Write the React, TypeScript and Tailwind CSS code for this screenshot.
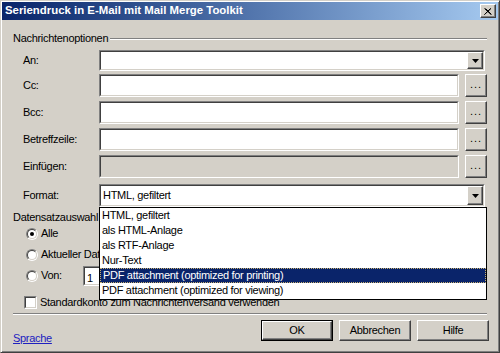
import React from 'react';

const items = [
  'HTML, gefiltert',
  'als HTML-Anlage',
  'als RTF-Anlage',
  'Nur-Text',
  'PDF attachment (optimized for printing)',
  'PDF attachment (optimized for viewing)',
];

// Win2000 style sunken edit frame
function Sunken({
  className = '',
  innerClass = 'bg-white',
  children,
}: {
  className?: string;
  innerClass?: string;
  children?: React.ReactNode;
}) {
  return (
    <div className={`border border-t-[#808080] border-l-[#808080] border-b-white border-r-white ${className}`}>
      <div className={`h-full border border-t-[#404040] border-l-[#404040] border-b-[#d4d0c8] border-r-[#d4d0c8] ${innerClass}`}>
        {children}
      </div>
    </div>
  );
}

function Raised({ className = '', children }: { className?: string; children?: React.ReactNode }) {
  return (
    <div
      className={`flex items-center justify-center bg-[#d4d0c8] border border-t-white border-l-white border-b-[#404040] border-r-[#404040] shadow-[inset_-1px_-1px_0_#808080] ${className}`}
    >
      {children}
    </div>
  );
}

function Arrow() {
  return (
    <svg width="7" height="4" viewBox="0 0 7 4">
      <polygon points="0,0 7,0 3.5,4" fill="#000" />
    </svg>
  );
}

function Combo({ value, className = '' }: { value?: string; className?: string }) {
  return (
    <Sunken className={className}>
      <div className="flex h-full items-center">
        <div className="flex-1 pl-[2px]">{value}</div>
        <Raised className="h-full w-[16px]">
          <Arrow />
        </Raised>
      </div>
    </Sunken>
  );
}

function Row({
  label,
  children,
  className = '',
}: {
  label: string;
  children: React.ReactNode;
  className?: string;
}) {
  return (
    <div className={`flex items-center pl-[10px] ${className}`}>
      <div className="w-[76px] shrink-0">{label}</div>
      {children}
    </div>
  );
}

function TextRow({ label, className = '', disabled = false }: { label: string; className?: string; disabled?: boolean }) {
  return (
    <Row label={label} className={className}>
      <Sunken className="h-full w-[360px]" innerClass={disabled ? 'bg-[#d4d0c8]' : 'bg-white'} />
      <Raised className="ml-[6px] h-full w-[22px] pb-[3px] text-[11px] leading-none tracking-[1px]">...</Raised>
    </Row>
  );
}

function Radio({ checked = false }: { checked?: boolean }) {
  return (
    <div className="flex h-[12px] w-[12px] items-center justify-center rounded-full border border-t-[#808080] border-l-[#808080] border-b-white border-r-white">
      <div className="flex h-full w-full items-center justify-center rounded-full border border-t-[#404040] border-l-[#404040] border-b-[#d4d0c8] border-r-[#d4d0c8] bg-white">
        {checked && <div className="h-[4px] w-[4px] rounded-full bg-black" />}
      </div>
    </div>
  );
}

export default function App() {
  return (
    <div className="relative h-[353px] w-[500px] overflow-hidden border border-t-[#d4d0c8] border-l-[#d4d0c8] border-b-[#404040] border-r-[#404040] bg-[#d4d0c8] font-['Liberation_Sans',Arial,sans-serif] text-[11px] tracking-[-0.3px] text-black shadow-[inset_1px_1px_0_#fff,inset_-1px_-1px_0_#808080]">
      <div className="p-[1px]">
        {/* title bar */}
        <div className="flex h-[18px] items-center bg-gradient-to-r from-[#0a246a] to-[#a6caf0] pl-[3px] pr-[2px]">
          <div className="flex-1 text-[11.4px] font-bold tracking-normal text-white">
            Seriendruck in E-Mail mit Mail Merge Toolkit
          </div>
          <Raised className="h-[14px] w-[16px]">
            <svg width="8" height="7" viewBox="0 0 8 7">
              <path d="M0.5 0.5 L7 6.5 M1.5 0.5 L7.5 6.5 M7 0.5 L0.5 6.5 M6.5 0.5 L0.5 6.5" stroke="#000" strokeWidth="1" />
            </svg>
          </Raised>
        </div>

        <div className="pl-[11px] pr-[9px]">
          {/* Nachrichtenoptionen */}
          <div className="mt-[11px] flex h-[14px] items-center">
            <span>Nachrichtenoptionen</span>
            <div className="ml-[2px] mr-[2px] mt-[2px] h-[2px] flex-1 border-t border-t-[#808080] border-b border-b-white" />
          </div>

          <Row label="An:" className="mt-[5px] h-[21px]">
            <Combo className="h-full w-[386px]" />
          </Row>
          <TextRow label="Cc:" className="mt-[3px] h-[23px]" />
          <TextRow label="Bcc:" className="mt-[4px] h-[23px]" />
          <TextRow label="Betreffzeile:" className="mt-[4px] h-[23px]" />
          <TextRow label="Einfügen:" className="mt-[4px] h-[23px]" disabled />
          <Row label="Format:" className="mt-[6px] h-[23px]">
            <Combo value="HTML, gefiltert" className="h-full w-[386px]" />
          </Row>

          {/* Datensatzauswahl */}
          <div className="mt-[3px] flex h-[14px] items-center">
            <span>Datensatzauswahl</span>
            <div className="ml-[2px] mr-[2px] mt-[2px] h-[2px] flex-1 border-t border-t-[#808080] border-b border-b-white" />
          </div>
          <div className="mt-[-1px] flex h-[21px] items-center gap-[3px] pl-[13px]">
            <Radio checked />
            <span>Alle</span>
          </div>
          <div className="flex h-[21px] items-center gap-[3px] pl-[13px]">
            <Radio />
            <span>Aktueller Datensatz</span>
          </div>
          <div className="flex h-[21px] items-center gap-[3px] pl-[13px]">
            <Radio />
            <span className="w-[39px]">Von:</span>
            <Sunken className="h-[20px] w-[60px]">
              <div className="pl-[2px] pt-[2px]">1</div>
            </Sunken>
          </div>

          <div className="mt-[8px] flex h-[16px] items-center gap-[3px] pl-[11px]">
            <Sunken className="h-[13px] w-[13px]" />
            <span>Standardkonto zum Nachrichtenversand verwenden</span>
          </div>

          <div className="mt-[3px] mr-[2px] h-[2px] border-t border-t-[#808080] border-b border-b-white" />

          {/* footer */}
          <div className="mt-[5px] flex items-start">
            <a className="mt-[10px] text-[#2020c0] underline" href="#">
              Sprache
            </a>
            <div className="ml-auto flex gap-[6px]">
              <div className="h-[21px] w-[72px] border border-black">
                <Raised className="h-full w-full">OK</Raised>
              </div>
              <Raised className="h-[21px] w-[72px]">Abbrechen</Raised>
              <Raised className="h-[21px] w-[72px]">Hilfe</Raised>
            </div>
          </div>
        </div>
      </div>

      {/* open Format dropdown */}
      <div className="absolute left-[98px] top-[206px] w-[388px] border border-black bg-white pb-[1px]">
        {items.map((item, i) => (
          <div
            key={item}
            className={`flex h-[15px] items-center pl-[2px] ${
              i === 4 ? 'border border-dotted border-[#c8b070] bg-[#0a246a] pl-[1px] text-white' : ''
            }`}
          >
            {item}
          </div>
        ))}
      </div>
    </div>
  );
}
